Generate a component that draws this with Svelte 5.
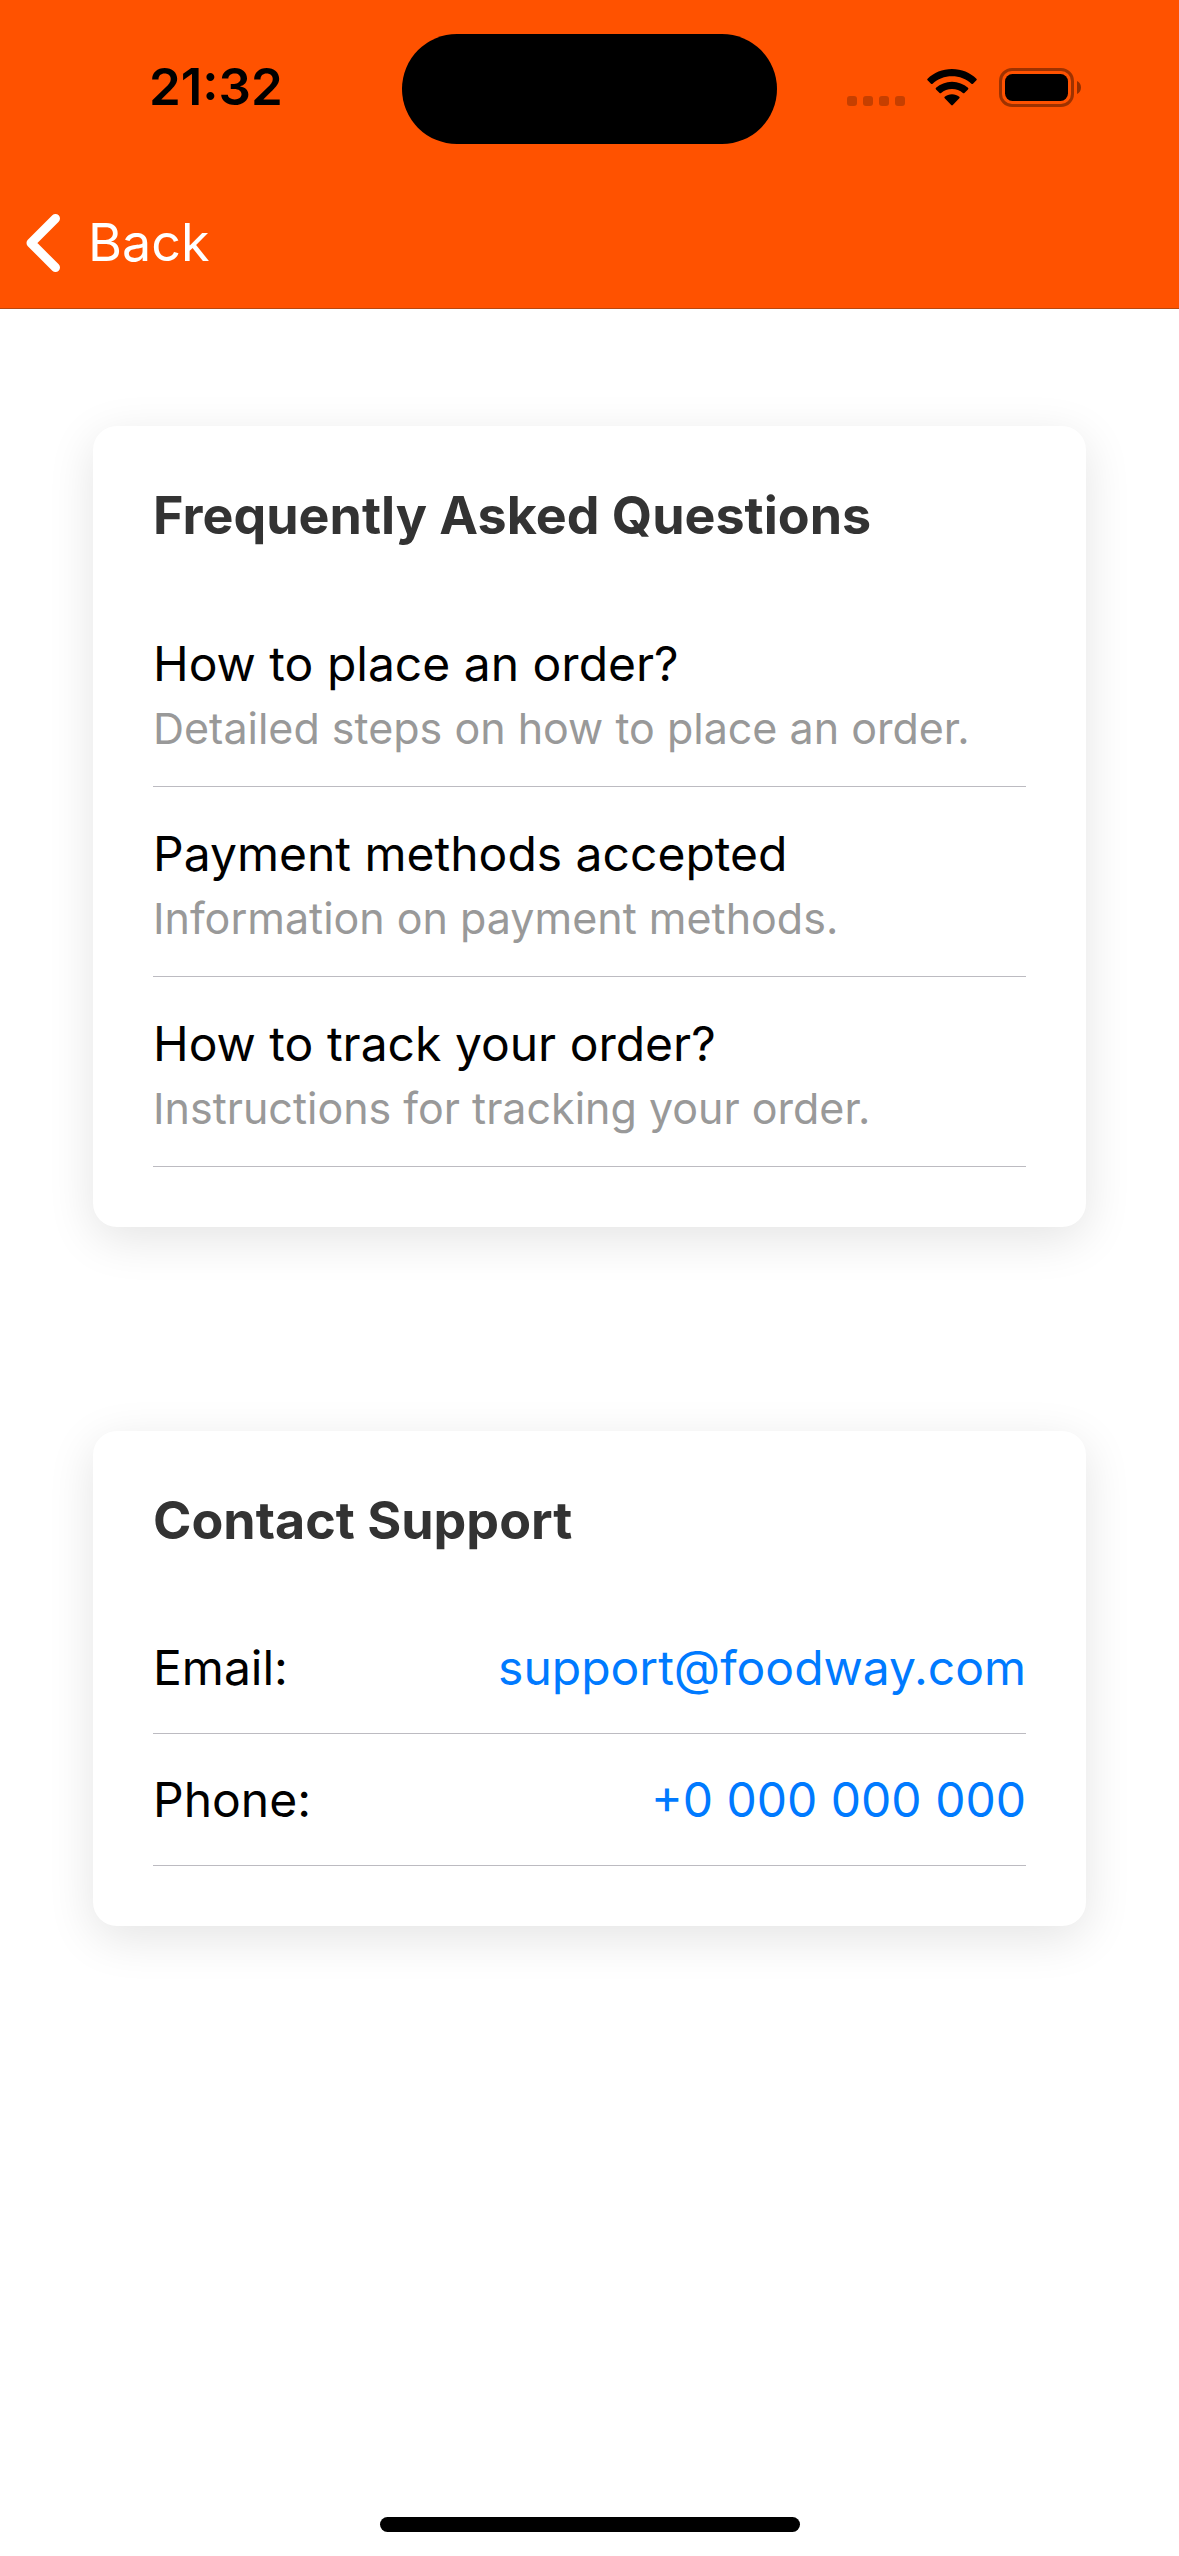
<script>
  const faqs = [
    { title: 'How to place an order?', text: 'Detailed steps on how to place an order.' },
    { title: 'Payment methods accepted', text: 'Information on payment methods.' },
    { title: 'How to track your order?', text: 'Instructions for tracking your order.' }
  ];
  const contacts = [
    { label: 'Email:', value: 'support@foodway.com', href: 'mailto:support@foodway.com' },
    { label: 'Phone:', value: '+0 000 000 000', href: 'tel:+0000000000' }
  ];
</script>

<div class="screen">
  <header class="header">
    <div class="status">
      <span class="time">21:32</span>
      <div class="island"></div>
      <div class="indicators">
        <svg class="signal" width="58" height="11" viewBox="0 0 58 11" aria-hidden="true">
          <rect x="0" width="10" height="10" rx="3" />
          <rect x="16" width="10" height="10" rx="3" />
          <rect x="32" width="10" height="10" rx="3" />
          <rect x="48" width="10" height="10" rx="3" />
        </svg>
        <svg width="50" height="38" viewBox="0 0 50 38" aria-hidden="true">
          <path d="M25 0C34.600 0 43.300 3.700 49.400 9.700Q50.200 10.500 49.400 11.300L46 14.700Q45.200 15.500 44.400 14.700C39.300 9.900 32.500 7.300 25 7.300S10.700 9.900 5.600 14.700Q4.800 15.500 4 14.700L0.600 11.300Q-0.200 10.500 0.600 9.700C6.700 3.700 15.400 0 25 0Z" />
          <path d="M25 12.700C31.200 12.700 36.700 15 41 18.800Q41.800 19.600 41 20.400L37.400 23.900Q36.700 24.600 35.900 23.900C33 21.400 29.200 19.900 25 19.900S17 21.400 14.100 23.900Q13.300 24.600 12.600 23.900L9 20.400Q8.200 19.600 9 18.800C13.300 15 18.800 12.700 25 12.700Z" />
          <path d="M25 25.300C27.800 25.300 30.300 26.200 32.300 27.800Q33.100 28.500 32.300 29.300L25.800 36.100Q25 36.900 24.200 36.100L17.700 29.300Q16.900 28.500 17.700 27.800C19.700 26.200 22.200 25.300 25 25.300Z" />
        </svg>
        <svg width="82" height="39" viewBox="0 0 82 39" aria-hidden="true">
          <rect class="shell" x="1.500" y="1.500" width="72" height="36" rx="11.500" />
          <rect x="6" y="6" width="63" height="27" rx="7.500" />
          <path class="tip" d="M78 13C80.400 14.100 82 16.500 82 19.500S80.400 24.900 78 26Z" />
        </svg>
      </div>
    </div>
    <nav class="nav">
      <button class="back" type="button">
        <svg width="34" height="58" viewBox="0 0 34 58" aria-hidden="true">
          <path d="M29.500 4.500L5 29L29.500 53.500" />
        </svg>
        <span>Back</span>
      </button>
    </nav>
  </header>

  <main class="content">
    <section class="card">
      <h2>Frequently Asked Questions</h2>
      <ul>
        {#each faqs as faq}
          <li class="faq">
            <h3>{faq.title}</h3>
            <p>{faq.text}</p>
          </li>
        {/each}
      </ul>
    </section>

    <section class="card">
      <h2>Contact Support</h2>
      <ul>
        {#each contacts as contact}
          <li class="contact">
            <span>{contact.label}</span>
            <a href={contact.href}>{contact.value}</a>
          </li>
        {/each}
      </ul>
    </section>
  </main>

  <div class="home"></div>
</div>

<style>
  :global(body) {
    background: #fff;
  }

  .screen {
    display: flex;
    flex-direction: column;
    min-height: 100vh;
    font-family: Inter, 'Liberation Sans', sans-serif;
    color: #000;
  }

  .header {
    background: #ff5200;
    border-bottom: 1px solid #b8470f;
  }

  .status {
    display: grid;
    grid-template-columns: 1fr 375px 1fr;
    align-items: center;
    padding-top: 34px;
  }

  .time {
    padding: 0 0 4px 149px;
    font-size: 51px;
    font-weight: 600;
    line-height: 60px;
  }

  .island {
    height: 110px;
    border-radius: 55px;
    background: #000;
  }

  .indicators {
    display: flex;
    justify-content: flex-end;
    align-items: flex-end;
    gap: 22px;
    padding: 0 98px 4px 0;
  }

  .signal {
    opacity: 0.22;
  }

  .shell {
    fill: none;
    stroke: #000;
    stroke-width: 3;
    opacity: 0.38;
  }

  .tip {
    opacity: 0.42;
  }

  .nav {
    display: flex;
    align-items: center;
    height: 130px;
    padding: 34px 26px 0;
  }

  .back {
    display: flex;
    align-items: center;
    gap: 28px;
    padding: 0;
    border: 0;
    background: none;
    color: #fff;
    font: inherit;
    font-size: 52px;
    line-height: 60px;
  }

  .back path {
    fill: none;
    stroke: #fff;
    stroke-width: 9;
    stroke-linecap: round;
    stroke-linejoin: round;
  }

  .content {
    display: flex;
    flex: 1;
    flex-direction: column;
    gap: 204px;
    padding: 117px 93px;
  }

  .card {
    padding: 60px;
    border-radius: 24px;
    background: #fff;
    box-shadow: 0 12px 48px rgba(0, 0, 0, 0.11);
  }

  h2,
  h3,
  p,
  ul {
    margin: 0;
    padding: 0;
  }

  h2 {
    margin-bottom: 51px;
    color: #333;
    font-size: 52px;
    font-weight: 700;
    line-height: 60px;
  }

  li {
    list-style: none;
    border-bottom: 1px solid #bcbbc1;
    font-size: 48px;
    line-height: 61px;
  }

  .faq {
    padding: 36px 0 30px;
  }

  h3 {
    margin-bottom: 6px;
    font-size: inherit;
    font-weight: 400;
  }

  p {
    color: #999;
    font-size: 43px;
    line-height: 56px;
  }

  .contact {
    display: flex;
    justify-content: space-between;
    padding: 35px 0;
  }

  a {
    color: #007aff;
    text-decoration: none;
  }

  .home {
    align-self: center;
    width: 420px;
    height: 15px;
    margin-bottom: 24px;
    border-radius: 8px;
    background: #000;
  }
</style>
